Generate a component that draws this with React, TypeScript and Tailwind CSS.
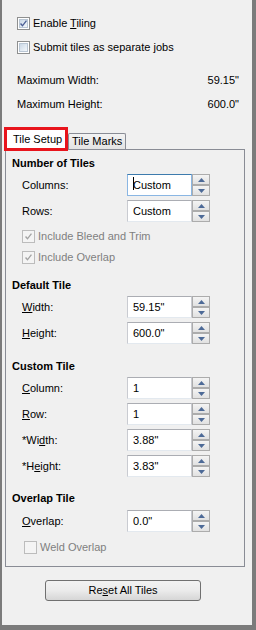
import React from 'react';

const font = { fontFamily: '"Liberation Sans", Arial, sans-serif' };

type BoxProps = { checked?: boolean; disabled?: boolean };

const CheckBox: React.FC<BoxProps> = ({ checked = false, disabled = false }) => (
  <span
    className={
      'relative flex h-[13px] w-[13px] shrink-0 items-center justify-center border ' +
      (disabled ? 'border-[#bcbcbc] bg-[#f4f4f4]' : 'border-[#8e8f8f] bg-white')
    }
  >
    <span
      className={
        'h-[9px] w-[9px] ' +
        (disabled
          ? 'bg-[#f4f4f4]'
          : 'bg-gradient-to-br from-[#cbd8e6] via-[#dfe8f1] to-[#f4f7fa] border border-[#b9c6d4]')
      }
    />
    {checked && (
      <svg viewBox="0 0 13 13" className="absolute inset-0 h-full w-full">
        <path
          d="M3 6.5 L5.3 9.2 L10 3"
          fill="none"
          stroke={disabled ? '#a3a3a3' : '#4b5e95'}
          strokeWidth="1.6"
        />
      </svg>
    )}
  </span>
);

const Spinner: React.FC = () => (
  <div className="flex w-[18px] shrink-0 flex-col">
    {[0, 1].map((i) => (
      <div
        key={i}
        className="flex h-[11px] items-center justify-center border border-[#acacac] bg-gradient-to-b from-[#f4f4f4] to-[#e1e1e1]"
      >
        <svg viewBox="0 0 7 4" className="h-[4px] w-[7px]">
          <path d={i === 0 ? 'M0 4 L3.5 0 L7 4 Z' : 'M0 0 L3.5 4 L7 0 Z'} fill="#4d6a97" />
        </svg>
      </div>
    ))}
  </div>
);

type FieldProps = { label: React.ReactNode; value: string; focused?: boolean; mt?: string };

const Field: React.FC<FieldProps> = ({ label, value, focused = false, mt = 'mt-[4px]' }) => (
  <div className={'flex h-[22px] items-center ' + mt}>
    <span className="ml-[10px] w-[105px] text-[11px] text-black">{label}</span>
    <div className="flex h-[22px]">
      <div
        className={
          'relative flex h-[22px] w-[65px] items-center bg-white pl-[5px] text-[11px] text-black border ' +
          (focused
            ? 'border-[#8ab6e3] border-t-[#3d7bad]'
            : 'border-[#c9cbd1] border-t-[#abadb3] border-b-[#e3e9ef]')
        }
      >
        {value}
        {focused && <span className="absolute left-[5px] top-[2px] h-[13px] w-px bg-black" />}
      </div>
      <Spinner />
    </div>
  </div>
);

const Header: React.FC<{ text: string; mt: string }> = ({ text, mt }) => (
  <div className={'h-[14px] text-[11px] leading-[14px] font-bold text-black ' + mt}>{text}</div>
);

const CheckRow: React.FC<{ label: React.ReactNode; checked?: boolean; disabled?: boolean; className?: string }> = ({
  label,
  checked,
  disabled,
  className = '',
}) => (
  <div className={'flex h-[13px] items-center gap-[3px] ' + className}>
    <CheckBox checked={checked} disabled={disabled} />
    <span className={'text-[11px] leading-[13px] ' + (disabled ? 'text-[#7f7f7f]' : 'text-black')}>{label}</span>
  </div>
);

export default function App() {
  return (
    <div
      style={font}
      className="flex h-[630px] w-[256px] flex-col border-l-2 border-r-4 border-b-[5px] border-[#7b7b7b] bg-[#f0f0f0]"
    >
      {/* Top options */}
      <div className="pl-[15px] pr-[13px] pt-[17px]">
        <CheckRow
          checked
          label={
            <>
              Enable <u>T</u>iling
            </>
          }
        />
        <CheckRow className="mt-[11px]" label="Submit tiles as separate jobs" />
        <div className="mt-[19px] flex h-[14px] items-center justify-between text-[11px] text-black">
          <span>Maximum Width:</span>
          <span>59.15"</span>
        </div>
        <div className="mt-[10px] flex h-[14px] items-center justify-between text-[11px] text-black">
          <span>Maximum Height:</span>
          <span>600.0"</span>
        </div>
      </div>

      {/* Tabs */}
      <div className="ml-[2px] mt-[16px] flex h-[22px] items-start">
        <div className="relative z-10 h-[24px] w-[64px] border-[3px] border-[#e8141c] bg-white">
          <div className="flex h-full items-center whitespace-nowrap pl-[6px] text-[11px] text-black">Tile Setup</div>
        </div>
        <div className="mt-[6px] flex h-[16px] items-center whitespace-nowrap rounded-t-[2px] border border-b-0 border-[#898c95] bg-gradient-to-b from-[#f3f3f3] to-[#e3e3e3] px-[3px] text-[11px] text-black">
          Tile Marks
        </div>
      </div>

      {/* Tab panel */}
      <div className="ml-[3px] h-[418px] w-[240px] border border-[#898c95] bg-[#f0f0f0] pl-[6px] pt-[6px]">
        <Header text="Number of Tiles" mt="" />
        <Field label="Columns:" value="Custom" focused />
        <Field label="Rows:" value="Custom" />
        <CheckRow className="ml-[10px] mt-[8px]" checked disabled label="Include Bleed and Trim" />
        <CheckRow className="ml-[10px] mt-[8px]" checked disabled label="Include Overlap" />

        <Header text="Default Tile" mt="mt-[14px]" />
        <Field
          label={
            <>
              <u>W</u>idth:
            </>
          }
          value={'59.15"'}
        />
        <Field
          label={
            <>
              <u>H</u>eight:
            </>
          }
          value={'600.0"'}
        />

        <Header text="Custom Tile" mt="mt-[15px]" />
        <Field
          label={
            <>
              <u>C</u>olumn:
            </>
          }
          value="1"
        />
        <Field
          label={
            <>
              <u>R</u>ow:
            </>
          }
          value="1"
        />
        <Field
          label={
            <>
              *Wi<u>d</u>th:
            </>
          }
          value={'3.88"'}
        />
        <Field
          label={
            <>
              *H<u>e</u>ight:
            </>
          }
          value={'3.83"'}
        />

        <Header text="Overlap Tile" mt="mt-[14px]" />
        <Field
          label={
            <>
              <u>O</u>verlap:
            </>
          }
          value={'0.0"'}
          mt="mt-[5px]"
        />
        <CheckRow className="ml-[12px] mt-[9px]" disabled label="Weld Overlap" />
      </div>

      {/* Reset button */}
      <button
        type="button"
        className="ml-[43px] mt-[13px] flex h-[21px] w-[156px] items-center justify-center rounded-[3px] border border-[#707070] bg-gradient-to-b from-[#f2f2f2] via-[#ebebeb] to-[#d6d6d6] text-[11px] text-black"
      >
        Re<u>s</u>et All Tiles
      </button>
    </div>
  );
}
